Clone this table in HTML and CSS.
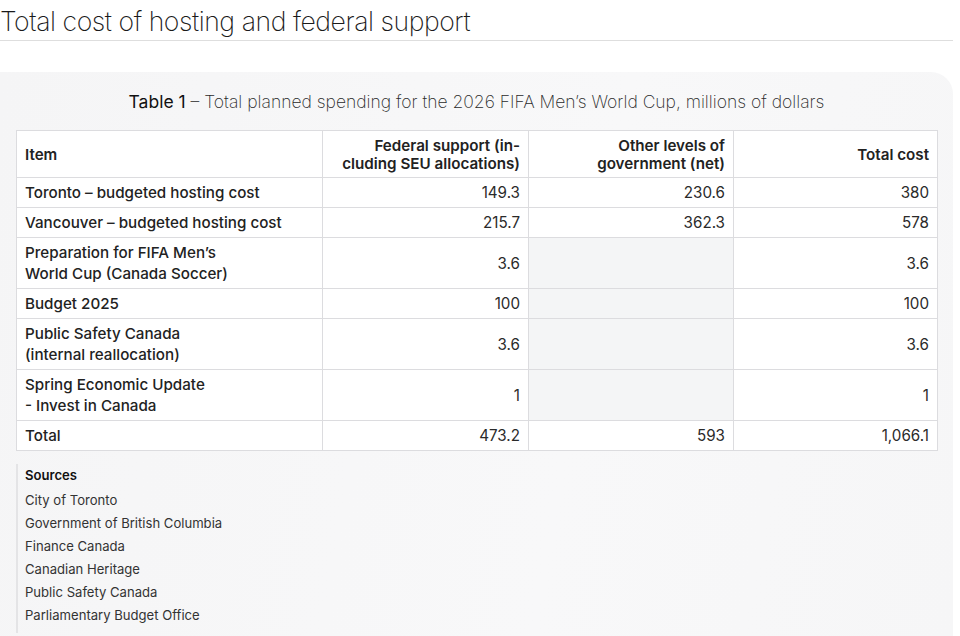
FILE: index.html
```html
<!DOCTYPE html>
<html lang="en">
<head>
<meta charset="utf-8">
<title>Total cost of hosting and federal support</title>
<link rel="stylesheet" href="styles.css">
</head>
<body>
<h1 class="page-title">Total cost of hosting and federal support</h1>
<section class="panel">
  <p class="caption"><span class="caption-label">Table 1</span> – Total planned spending for the 2026 FIFA Men’s World Cup, millions of dollars</p>
  <table class="data">
    <colgroup>
      <col class="c-item"><col class="c-fed"><col class="c-other"><col class="c-total">
    </colgroup>
    <thead>
      <tr>
        <th class="item">Item</th>
        <th class="num">Federal support (in-<br>cluding SEU allocations)</th>
        <th class="num">Other levels of<br>government (net)</th>
        <th class="num">Total cost</th>
      </tr>
    </thead>
    <tbody>
      <tr><td class="item">Toronto – budgeted hosting cost</td><td class="num">149.3</td><td class="num">230.6</td><td class="num">380</td></tr>
      <tr><td class="item">Vancouver – budgeted hosting cost</td><td class="num">215.7</td><td class="num">362.3</td><td class="num">578</td></tr>
      <tr><td class="item">Preparation for FIFA Men’s<br>World Cup (Canada Soccer)</td><td class="num">3.6</td><td class="num empty"></td><td class="num">3.6</td></tr>
      <tr><td class="item">Budget 2025</td><td class="num">100</td><td class="num empty"></td><td class="num">100</td></tr>
      <tr><td class="item">Public Safety Canada<br>(internal reallocation)</td><td class="num">3.6</td><td class="num empty"></td><td class="num">3.6</td></tr>
      <tr><td class="item">Spring Economic Update<br>- Invest in Canada</td><td class="num">1</td><td class="num empty"></td><td class="num">1</td></tr>
      <tr><td class="item">Total</td><td class="num">473.2</td><td class="num">593</td><td class="num">1,066.1</td></tr>
    </tbody>
  </table>
  <div class="sources">
    <p class="sources-title">Sources</p>
    <ul class="sources-list">
      <li>City of Toronto</li>
      <li>Government of British Columbia</li>
      <li>Finance Canada</li>
      <li>Canadian Heritage</li>
      <li>Public Safety Canada</li>
      <li>Parliamentary Budget Office</li>
    </ul>
  </div>
</section>
</body>
</html>
```
FILE: styles.css
```css
html, body {
  margin: 0;
  padding: 0;
  background: #ffffff;
}
body {
  font-family: Inter, "Noto Sans", "Liberation Sans", sans-serif;
  color: #1d1d1f;
  width: 960px;
  height: 636px;
  overflow: hidden;
}
.page-title {
  margin: 0;
  width: 953px;
  font-size: 26.6px;
  font-weight: 200;
  line-height: 42px;
  height: 40px;
  letter-spacing: -0.45px;
  color: #1a1a1a;
  border-bottom: 1px solid #dedede;
  box-sizing: content-box;
  white-space: nowrap;
  overflow: hidden;
}
.panel {
  margin-top: 31px;
  width: 953px;
  height: 564px;
  background: linear-gradient(100deg, #f5f5f6 0%, #f8f8f9 60%, #f6f6f7 100%);
  border-radius: 0 22px 0 0;
  padding-top: 1px;
  box-sizing: border-box;
}
.caption {
  margin: 16px 0 0;
  text-align: center;
  font-size: 17.5px;
  line-height: 26px;
  font-weight: 200;
  letter-spacing: 0;
  color: #2a2a2a;
  height: 41px;
}
.caption-label {
  font-weight: 400;
  color: #111;
}
.data {
  margin: 0 16px;
  width: 921px;
  border-collapse: collapse;
  background: #ffffff;
  table-layout: fixed;
  font-size: 15.2px;
}
.c-item { width: 306px; }
.c-fed { width: 206px; }
.c-other { width: 205px; }
.c-total { width: 204px; }
.data th, .data td {
  border: 1px solid #dcdcdf;
  padding: 4px 8px 4px;
  line-height: 21px;
  vertical-align: middle;
}
.data th {
  font-weight: 600;
  line-height: 18px;
  padding: 5px 8px 4px;
  height: 37px;
  color: #222;
}
.data td.item, .data th.item {
  text-align: left;
}
.data td.item {
  font-weight: 500;
  color: #222;
}
.data .num {
  text-align: right;
}
.data td.num {
  font-weight: 400;
  color: #2a2a2a;
}
.data td.empty {
  background: #f4f5f6;
}
.sources {
  margin: 13px 0 0 16px;
  border-left: 2px solid #e4e4e6;
  padding: 0 0 6px 7px;
  font-size: 13.1px;
  line-height: 23px;
}
.sources-title {
  margin: 0 0 2px;
  font-weight: 600;
  color: #111;
}
.sources-list {
  margin: 0;
  padding: 0;
  list-style: none;
  color: #333;
}
```
